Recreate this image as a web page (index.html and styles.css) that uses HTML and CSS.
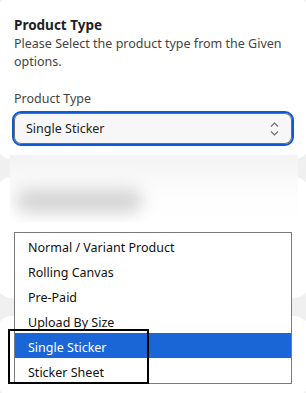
FILE: index.html
```html
<!DOCTYPE html>
<html>
<head>
<meta charset="UTF-8">
  <meta name="viewport" content="width=device-width, initial-scale=1.0">
  <title>Product Type</title>
  <link rel="stylesheet" href="styles.css">
</head>
<body>
<div id="page">
  <div class="card" id="type_card">
    <p class="title">Product Type</p>
    <p class="desc">Please Select the product type from the Given options.</p>
    <label class="field_label">Product Type</label>
    <div class="select_box">
      <span>Single Sticker</span>
      <svg class="arrows" width="9" height="14" viewBox="0 0 9 14">
        <path d="M1 4.5 L4.5 1 L8 4.5 M1 9.5 L4.5 13 L8 9.5" fill="none" stroke="#6f6f6f" stroke-width="1.2"/>
      </svg>
    </div>
  </div>
  <div class="card" id="second_card"></div>
  <div class="card" id="third_card"></div>

  <!-- blurred preview over the gap -->
  <div id="blur_area">
    <div class="blob"></div>
  </div>

  <!-- open select list -->
  <ul id="options">
    <li>Normal / Variant Product</li>
    <li>Rolling Canvas</li>
    <li>Pre-Paid</li>
    <li>Upload By Size</li>
    <li class="picked">Single Sticker</li>
    <li>Sticker Sheet</li>
  </ul>
  <div id="mark"></div>
</div>
</body>
</html>
```

FILE: styles.css
```css
    body {
      font-family: "Noto Sans", "Open Sans", sans-serif;
      margin: 0;
      padding: 0;
      background: #f0f0f0;
      color: #1f1f1f;
      overflow: hidden;
    }

#page {
  position: relative;
  height: 393px;
  overflow: hidden;
}

.card {
  background: #fff;
  border-radius: 16px;
  margin: 0 -4px 18px -4px;
}

#type_card {
  margin-top: -3px;
  height: 162px;
  padding: 19px 18px 0 18px;
  box-sizing: border-box;
}

.title {
  margin: 0;
  font-size: 13.5px;
  font-weight: bold;
  line-height: 18px;
}

.desc {
  margin: 1px 0 0 0;
  font-size: 12.5px;
  line-height: 18px;
  color: #444;
}

.field_label {
  display: block;
  margin-top: 19px;
  font-size: 12.5px;
  line-height: 18px;
  color: #444;
}

.select_box {
  margin: 3px -2px 0 -2px;
  height: 35px;
  border: 2px solid #0b5bd6;
  border-radius: 9px;
  box-sizing: border-box;
  display: flex;
  align-items: center;
  justify-content: space-between;
  box-shadow: inset 0 0 0 1px #6e6e6e;
  background: #f7f7f7;
  padding: 0 13px 0 12px;
  font-size: 12.5px;
  color: #222;
}

#second_card {
  height: 121px;
}

#third_card {
  height: 80px;
}

#blur_area {
  position: absolute;
  left: 10px;
  top: 155px;
  width: 288px;
  height: 67px;
  background: linear-gradient(#f3f3f3, #fdfdfd 60%, #fff);
  overflow: hidden;
}

#blur_area .blob {
  position: absolute;
  left: 6px;
  top: 34px;
  width: 126px;
  height: 24px;
  border-radius: 12px;
  background: #d4d4d4;
  filter: blur(8px);
}

#options {
  position: absolute;
  left: 14px;
  top: 232px;
  width: 278px;
  margin: 0;
  padding: 0;
  list-style: none;
  background: #fff;
  border: 1px solid #7a7a7a;
  box-sizing: border-box;
}

#options li {
  height: 25px;
  box-sizing: border-box;
  padding: 5px 0 0 13px;
  line-height: 19px;
  font-size: 12.5px;
  color: #111;
}

#options li.picked {
  background: #1b66d6;
  color: #fff;
}

#mark {
  position: absolute;
  left: 8px;
  top: 329px;
  width: 141px;
  height: 55px;
  border: 2px solid #000;
  box-sizing: border-box;
}
```
